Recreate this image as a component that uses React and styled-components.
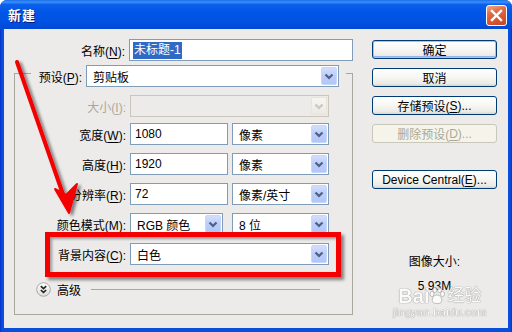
import React from 'react'
import styled, { createGlobalStyle } from 'styled-components'

const GlobalStyle = createGlobalStyle`
  html, body {
    margin: 0;
    padding: 0;
    background: #fff;
  }
  body {
    font-family: 'Liberation Sans', 'Noto Sans CJK SC', sans-serif;
    font-size: 12px;
    color: #000;
  }
`

const CLIENT = '#ecebea'

const Window = styled.div`
  position: relative;
  width: 512px;
  height: 332px;
  display: flex;
  flex-direction: column;
  background: linear-gradient(90deg, #0831c8 0, #0a4ede 2px, #0a4ede calc(100% - 2px), #0831c8 100%);
  border-radius: 7px 7px 0 0;
  overflow: hidden;
`

const TitleBar = styled.div`
  height: 29px;
  flex: none;
  display: flex;
  align-items: center;
  justify-content: space-between;
  padding: 0 5px 0 8px;
  background: linear-gradient(
    180deg,
    #1a6ee8 0%,
    #3d8ff8 7%,
    #0a5fec 16%,
    #0055e6 45%,
    #0052e2 75%,
    #0049d4 100%
  );
`

const Title = styled.span`
  color: #fff;
  font-weight: bold;
  font-size: 13px;
  letter-spacing: 1px;
  text-shadow: 1px 1px 0 #0a1a78;
`

const CloseButton = styled.div`
  width: 21px;
  height: 21px;
  margin-top: 2px;
  box-sizing: border-box;
  border: 1px solid #fff;
  border-radius: 3px;
  background: linear-gradient(160deg, #f0a88c 0%, #e06a44 35%, #c9431d 100%);
  display: flex;
  align-items: center;
  justify-content: center;
`

const Client = styled.div`
  flex: 1;
  margin: 0 4px 4px;
  background: ${CLIENT};
  display: flex;
  gap: 19px;
  padding: 10px 0 0 10px;
`

const LeftPanel = styled.div`
  width: 339px;
  display: flex;
  flex-direction: column;
`

const Row = styled.div`
  display: flex;
  align-items: center;
  gap: 4px;
  height: 22px;
  margin-top: ${(p) => p.$mt || 0}px;
`

const LabelText = styled.span`
  width: ${(p) => p.$w}px;
  text-align: right;
  white-space: nowrap;
  color: ${(p) => (p.$disabled ? '#aca899' : '#000')};
  u {
    text-decoration-thickness: 1px;
    text-underline-offset: 2px;
  }
`

const Input = styled.div`
  width: ${(p) => p.$w}px;
  height: 22px;
  box-sizing: border-box;
  border: 1px solid #7f9db9;
  background: #fff;
  display: flex;
  align-items: center;
  padding-left: 4px;
  white-space: nowrap;
`

const Selected = styled.span`
  background: #316ac5;
  color: #fff;
  line-height: 17px;
  padding: 0 1px;
  margin-left: -1px;
`

const SelectBox = styled.div`
  width: ${(p) => p.$w}px;
  height: 22px;
  box-sizing: border-box;
  margin-left: ${(p) => p.$ml || 0}px;
  border: 1px solid ${(p) => (p.$disabled ? '#c9c7ba' : '#7f9db9')};
  background: ${(p) => (p.$disabled ? CLIENT : '#fff')};
  display: flex;
  align-items: center;
  padding-left: 6px;
  white-space: nowrap;
`

const DropButton = styled.span`
  margin-left: auto;
  margin-right: 1px;
  width: 16px;
  height: 18px;
  box-sizing: border-box;
  border-radius: 2px;
  border: 1px solid ${(p) => (p.$disabled ? '#e6e4dc' : '#c6d6fc')};
  background: ${(p) =>
    p.$disabled
      ? 'linear-gradient(180deg, #f6f5f0, #ebe9e2)'
      : 'linear-gradient(180deg, #d2defd 0%, #bccdf9 50%, #b2c6f7 100%)'};
  display: flex;
  align-items: center;
  justify-content: center;
`

const GroupBox = styled.div`
  margin-top: 12px;
  width: 339px;
  height: 242px;
  box-sizing: border-box;
  border: 1px solid #a9a89c;
  display: flex;
  flex-direction: column;
`

const PresetRow = styled(Row)`
  align-self: flex-start;
  margin: -9px 0 0 16px;
  padding: 0 7px 0 5px;
  background: ${CLIENT};
`

const AdvancedRow = styled.div`
  display: flex;
  align-items: center;
  gap: 6px;
  margin: 17px 32px 0 21px;
  height: 15px;
`

const Rule = styled.div`
  flex: 1;
  height: 1px;
  background: #a9a89c;
  margin-left: 4px;
`

const RightPanel = styled.div`
  width: 125px;
  display: flex;
  flex-direction: column;
  padding-top: 1px;
`

const Button = styled.div`
  width: 125px;
  height: 19px;
  box-sizing: border-box;
  margin-top: ${(p) => p.$mt || 0}px;
  margin-bottom: 9px;
  border: 1px solid ${(p) => (p.$disabled ? '#c9c7ba' : '#003c74')};
  border-radius: 3px;
  background: ${(p) =>
    p.$disabled
      ? '#f5f4ea'
      : 'linear-gradient(180deg, #ffffff 0%, #f7f7f4 45%, #ecebe6 85%, #d8d4cb 100%)'};
  box-shadow: ${(p) => (p.$default ? 'inset 0 0 0 1px #a9c2f0, inset 0 -1px 0 1px #97b3ea' : 'none')};
  color: ${(p) => (p.$disabled ? '#aca899' : '#000')};
  display: flex;
  align-items: center;
  justify-content: center;
  white-space: nowrap;
  u {
    text-underline-offset: 2px;
  }
`

const SizeInfo = styled.div`
  margin-top: 57px;
  display: flex;
  flex-direction: column;
  align-items: center;
  gap: 9px;
  line-height: 15px;
`

const Highlight = styled.div`
  position: absolute;
  left: 45px;
  top: 232px;
  width: 296px;
  height: 45px;
  box-sizing: border-box;
  border: 5px solid #f50000;
  box-shadow: 3px 3px 3px rgba(0, 0, 0, 0.45), inset 2px 2px 3px rgba(0, 0, 0, 0.35);
`

const Overlay = styled.svg`
  position: absolute;
  left: 0;
  top: 0;
  width: 512px;
  height: 332px;
  pointer-events: none;
`

const Watermark = styled.div`
  position: absolute;
  left: 393px;
  top: 286px;
  display: flex;
  flex-direction: column;
  align-items: center;
  color: #fff;
  opacity: 0.8;
  text-shadow: 0 0 1px #777, 0 0 1px #777;
  pointer-events: none;
`

const MarkTop = styled.div`
  display: flex;
  align-items: center;
  font-family: 'Liberation Sans', 'Noto Sans CJK SC', sans-serif;
  font-weight: bold;
  font-size: 20px;
  line-height: 20px;
`

const MarkCn = styled.span`
  font-size: 17px;
  font-weight: normal;
  margin-left: 2px;
`

const MarkUrl = styled.div`
  font-size: 11px;
  line-height: 12px;
  letter-spacing: 0.3px;
`

const Chevron = ({ disabled }) => (
  <svg width="10" height="7" viewBox="0 0 10 7">
    <polyline
      points="1.5,1.5 5,5 8.5,1.5"
      fill="none"
      stroke={disabled ? '#c9c7ba' : '#4d6185'}
      strokeWidth="2.2"
    />
  </svg>
)

const Label = ({ text, k, w, disabled }) => (
  <LabelText $w={w} $disabled={disabled}>
    {text}(<u>{k}</u>):
  </LabelText>
)

const Select = ({ w, ml, value, disabled }) => (
  <SelectBox $w={w} $ml={ml} $disabled={disabled}>
    {value}
    <DropButton $disabled={disabled}>
      <Chevron disabled={disabled} />
    </DropButton>
  </SelectBox>
)

const fields = [
  { label: '宽度', k: 'W', value: '1080', unit: '像素', mt: 6 },
  { label: '高度', k: 'H', value: '1920', unit: '像素', mt: 8 },
  { label: '分辨率', k: 'R', value: '72', unit: '像素/英寸', mt: 8 },
]

export default function App() {
  return (
    <>
      <GlobalStyle />
      <Window>
        <TitleBar>
          <Title>新建</Title>
          <CloseButton>
            <svg width="13" height="13" viewBox="0 0 13 13">
              <path d="M2 2 L11 11 M11 2 L2 11" stroke="#fff" strokeWidth="2.4" strokeLinecap="square" />
            </svg>
          </CloseButton>
        </TitleBar>
        <Client>
          <LeftPanel>
            <Row>
              <Label text="名称" k="N" w={112} />
              <Input $w={226}>
                <Selected>未标题-1</Selected>
              </Input>
            </Row>
            <GroupBox>
              <PresetRow>
                <Label text="预设" k="P" w={46} />
                <Select w={253} value="剪贴板" />
              </PresetRow>
              <Row $mt={8}>
                <Label text="大小" k="I" w={111} disabled />
                <Select w={199} disabled />
              </Row>
              {fields.map((f) => (
                <Row key={f.k} $mt={f.mt}>
                  <Label text={f.label} k={f.k} w={111} />
                  <Input $w={98}>{f.value}</Input>
                  <Select w={97} value={f.unit} />
                </Row>
              ))}
              <Row $mt={8}>
                <Label text="颜色模式" k="M" w={111} />
                <Select w={93} value="RGB 颜色" />
                <Select w={97} ml={5} value="8 位" />
              </Row>
              <Row $mt={8}>
                <Label text="背景内容" k="C" w={111} />
                <Select w={199} value="白色" />
              </Row>
              <AdvancedRow>
                <svg width="15" height="15" viewBox="0 0 15 15">
                  <defs>
                    <linearGradient id="adv" x1="0" y1="0" x2="0" y2="1">
                      <stop offset="0" stopColor="#ffffff" />
                      <stop offset="1" stopColor="#dcdcd6" />
                    </linearGradient>
                  </defs>
                  <circle cx="7.5" cy="7.5" r="6.8" fill="url(#adv)" stroke="#a8a8a0" strokeWidth="1" />
                  <polyline points="4.8,4.2 7.5,6.6 10.2,4.2" fill="none" stroke="#222" strokeWidth="1.6" />
                  <polyline points="4.8,8 7.5,10.4 10.2,8" fill="none" stroke="#222" strokeWidth="1.6" />
                </svg>
                <span>高级</span>
                <Rule />
              </AdvancedRow>
            </GroupBox>
          </LeftPanel>
          <RightPanel>
            <Button $default>确定</Button>
            <Button>取消</Button>
            <Button>
              存储预设(<u>S</u>)...
            </Button>
            <Button $disabled>
              删除预设(<u>D</u>)...
            </Button>
            <Button $mt={18}>
              Device Central(<u>E</u>)...
            </Button>
            <SizeInfo>
              <span>图像大小:</span>
              <span>5.93M</span>
            </SizeInfo>
          </RightPanel>
        </Client>

        <Highlight />
        <Overlay viewBox="0 0 512 332">
          <defs>
            <filter id="shadow" x="-20%" y="-20%" width="140%" height="140%">
              <feDropShadow dx="3" dy="2" stdDeviation="1.5" floodColor="#000" floodOpacity="0.45" />
            </filter>
          </defs>
          <g filter="url(#shadow)" fill="#f50000" stroke="#f50000">
            <line x1="17" y1="62" x2="66" y2="203" strokeWidth="4" strokeLinecap="round" />
            <polygon points="69,213 55,189 66,195 77,184" strokeWidth="2" strokeLinejoin="round" />
          </g>
        </Overlay>
        <Watermark>
          <MarkTop>
            Bai
            <svg width="16" height="18" viewBox="0 0 16 18">
              <g fill="#fff" stroke="#888" strokeWidth="0.6">
                <ellipse cx="3" cy="7" rx="2" ry="2.6" />
                <ellipse cx="6" cy="3" rx="2" ry="2.6" />
                <ellipse cx="10.5" cy="3" rx="2" ry="2.6" />
                <ellipse cx="13.5" cy="7" rx="2" ry="2.6" />
                <path d="M8 8 C4 8 2 13 4 15.5 C6 17 10 17 12 15.5 C14 13 12 8 8 8 Z" />
              </g>
            </svg>
            <MarkCn>经验</MarkCn>
          </MarkTop>
          <MarkUrl>jingyan.baidu.com</MarkUrl>
        </Watermark>
      </Window>
    </>
  )
}
